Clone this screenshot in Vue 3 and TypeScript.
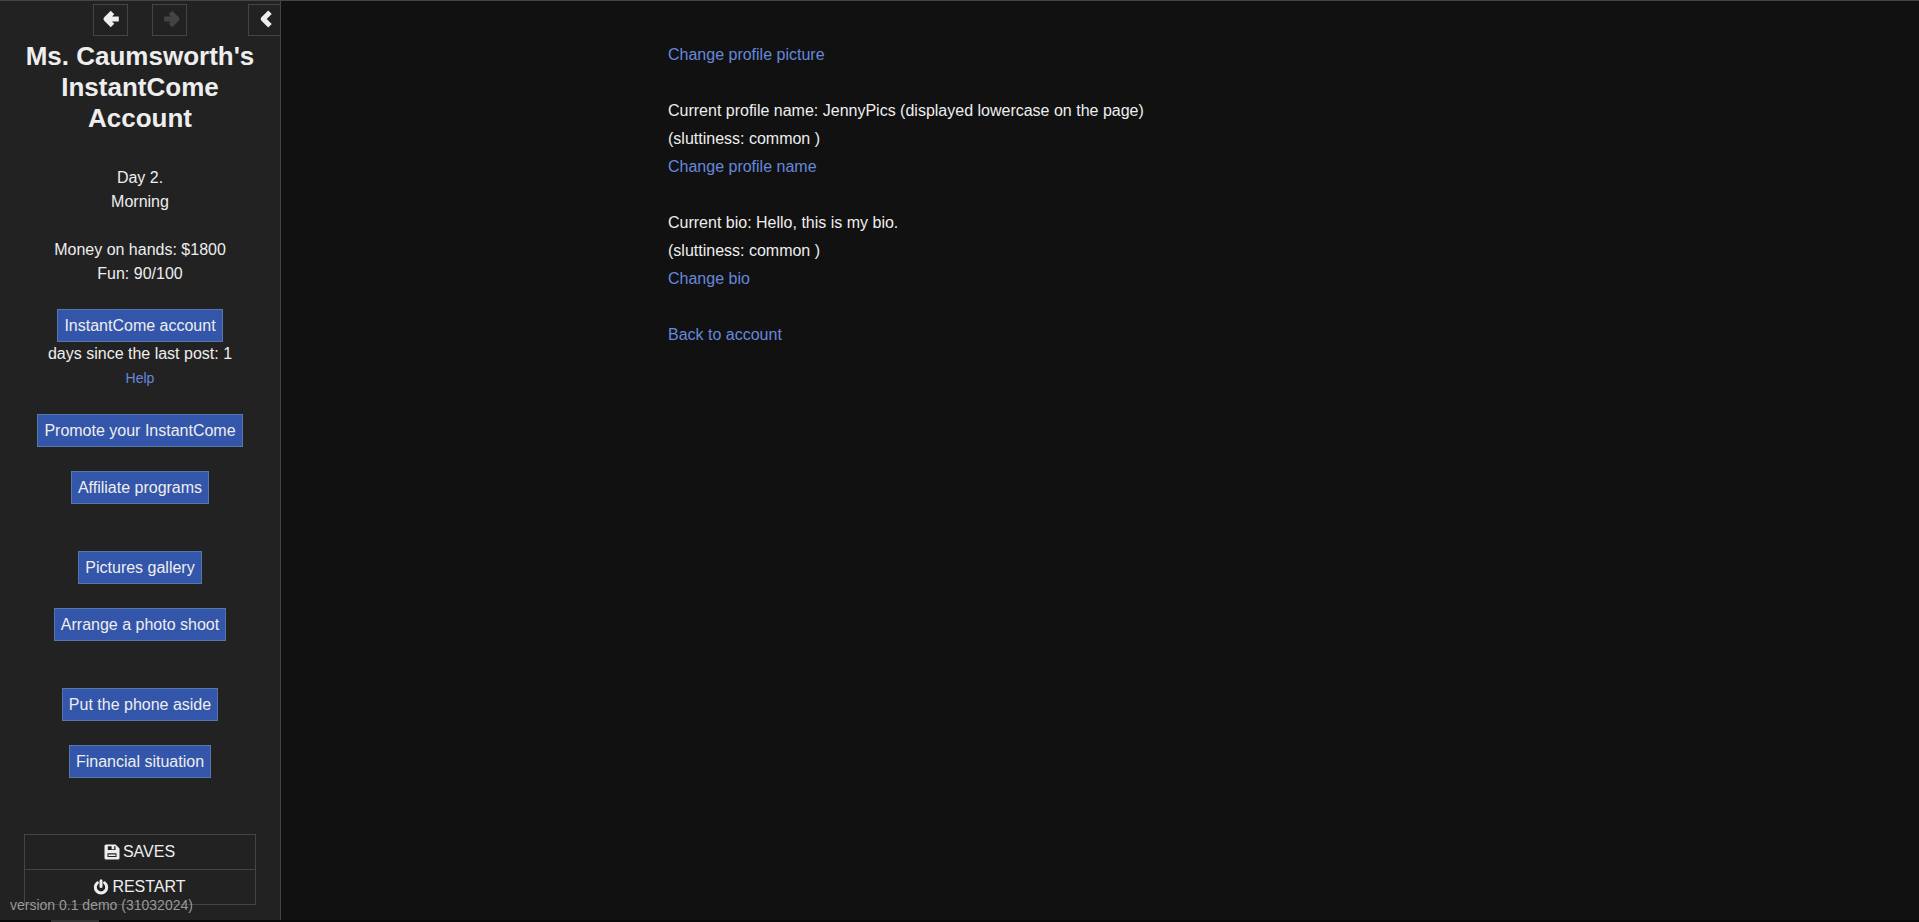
<script setup lang="ts">
import { ref } from 'vue'

const collapsed = ref(false)
const groups: string[][] = [
  ['Promote your InstantCome', 'Affiliate programs'],
  ['Pictures gallery', 'Arrange a photo shoot'],
  ['Put the phone aside', 'Financial situation'],
]
</script>

<template>
  <div class="page">
    <aside class="sidebar">
      <div class="tray">
        <nav class="history" aria-label="History">
          <button class="tool" type="button" aria-label="Go back">
            <svg viewBox="0 0 18 18" width="18" height="18">
              <path d="M9.500 2.500 3 9l6.500 6.500M4 9h11.800" />
            </svg>
          </button>
          <button class="tool" type="button" aria-label="Go forward" disabled>
            <svg viewBox="0 0 18 18" width="18" height="18">
              <path d="M8.500 2.500 15 9l-6.500 6.500M14 9H2.200" />
            </svg>
          </button>
        </nav>
        <button class="tool toggle" type="button" aria-label="Toggle the sidebar" @click="collapsed = !collapsed">
          <svg viewBox="0 0 18 18" width="18" height="18">
            <path d="M13 2.200 6.200 9l6.800 6.800" />
          </svg>
        </button>
      </div>

      <div v-show="!collapsed" class="body">
        <h1>Ms. Caumsworth's InstantCome Account</h1>

        <div class="stats">
          <p>Day 2.<br />Morning</p>
          <p>Money on hands: $1800<br />Fun: 90/100</p>
        </div>

        <div class="account">
          <button class="action" type="button">InstantCome account</button>
          <span>days since the last post: 1</span>
          <a class="help" href="#">Help</a>
        </div>

        <div class="groups">
          <div v-for="(group, i) in groups" :key="i" class="group">
            <button v-for="label in group" :key="label" class="action" type="button">{{ label }}</button>
          </div>
        </div>

        <div class="menu">
          <button type="button">
            <svg class="solid" viewBox="0 0 16 16" width="16" height="16">
              <path fill-rule="evenodd" d="M2 0.500h9.600L15.500 4.400V14a1.500 1.500 0 0 1-1.500 1.500H2A1.500 1.500 0 0 1 .5 14V2A1.500 1.500 0 0 1 2 .5ZM3.800 2.300v3.700h7.700v-3.700ZM3.500 9.200v3.800h9V9.200Z" />
              <path d="M7.600 2h2.600v3.200H7.600ZM4.500 10.400h7v1.600h-7Z" />
            </svg>
            <span>SAVES</span>
          </button>
          <button type="button">
            <svg class="power" viewBox="0 0 16 16" width="16" height="16">
              <path d="M4.400 3.800a5.700 5.700 0 1 0 7.200 0M8 1.700v5.800" />
            </svg>
            <span>RESTART</span>
          </button>
        </div>
      </div>
      <small class="version">version 0.1 demo (31032024)</small>
    </aside>

    <main class="story">
      <section class="passage">
        <p><a href="#">Change profile picture</a></p>
        <p>
          Current profile name: JennyPics (displayed lowercase on the page)<br />
          (sluttiness: common )<br />
          <a href="#">Change profile name</a>
        </p>
        <p>
          Current bio: Hello, this is my bio.<br />
          (sluttiness: common )<br />
          <a href="#">Change bio</a>
        </p>
        <p><a href="#">Back to account</a></p>
      </section>
    </main>
    <div class="edge"><span class="thumb"></span></div>
  </div>
</template>

<style>
body {
  margin: 0;
  background: #111;
}
</style>

<style scoped>
* {
  box-sizing: border-box;
}
.page {
  position: relative;
  display: flex;
  min-height: 100vh;
  border-top: 1px solid #444;
  background: #111;
  color: #eee;
  font: 16px/24px "Liberation Sans", Arial, sans-serif;
}
a {
  color: #68d;
  text-decoration: none;
}
a:hover {
  text-decoration: underline;
}
p {
  margin: 0;
}
button {
  font: inherit;
  color: #eee;
  cursor: pointer;
}
svg {
  display: block;
  flex: none;
  fill: none;
  stroke: currentColor;
}
.sidebar {
  position: relative;
  flex: none;
  width: 281px;
  border-right: 1px solid #444;
  background: #222;
  text-align: center;
}
.tray {
  display: flex;
  justify-content: flex-end;
  gap: 61px;
  padding-top: 3px;
}
.history {
  display: flex;
  gap: 24px;
}
.tool {
  display: flex;
  align-items: center;
  justify-content: center;
  width: 35px;
  height: 32px;
  padding: 0 0 2px 2px;
  border: 1px solid #444;
  background: transparent;
}
.tool svg {
  overflow: visible;
  stroke-width: 5;
  stroke-linejoin: round;
}
.tool:disabled {
  color: #444;
  cursor: default;
}
.toggle {
  width: 32px;
  border-right: 0;
}
.body {
  padding: 5px 24px 0;
}
h1 {
  margin: 0 0 32px;
  font-size: 26px;
  line-height: 31px;
}
.stats {
  display: grid;
  gap: 24px;
}
.account {
  display: flex;
  flex-direction: column;
  align-items: center;
  margin: 23px 0 24px;
}
.action {
  padding: 6px;
  border: 1px solid #57a;
  background: #35a;
  line-height: 19px;
}
.help {
  font-size: 14px;
}
.groups {
  display: grid;
  gap: 47px;
}
.group {
  display: flex;
  flex-direction: column;
  align-items: center;
  gap: 24px;
}
.menu {
  display: grid;
  margin-top: 56px;
  border: 1px solid #444;
}
.menu button {
  display: flex;
  align-items: center;
  justify-content: center;
  gap: 3px;
  height: 34px;
  padding: 0 1px 0 0;
  border: 0;
  background: transparent;
}
.menu button + button {
  height: 35px;
  border-top: 1px solid #444;
}
.solid {
  fill: currentColor;
  stroke: none;
}
.power {
  stroke-width: 3;
  stroke-linecap: round;
}
.version {
  position: absolute;
  bottom: 5px;
  left: 10px;
  color: #999;
  font-size: 14px;
}
.story {
  flex: 1;
  padding: 40px 48px;
}
.passage {
  display: grid;
  gap: 28px;
  max-width: 864px;
  margin: 0 auto;
  line-height: 28px;
}
.edge {
  position: absolute;
  right: 0;
  bottom: 0;
  left: 0;
  height: 2px;
  padding-left: 51px;
  background: #090909;
}
.thumb {
  display: block;
  width: 48px;
  height: 2px;
  background: #333;
}
</style>
